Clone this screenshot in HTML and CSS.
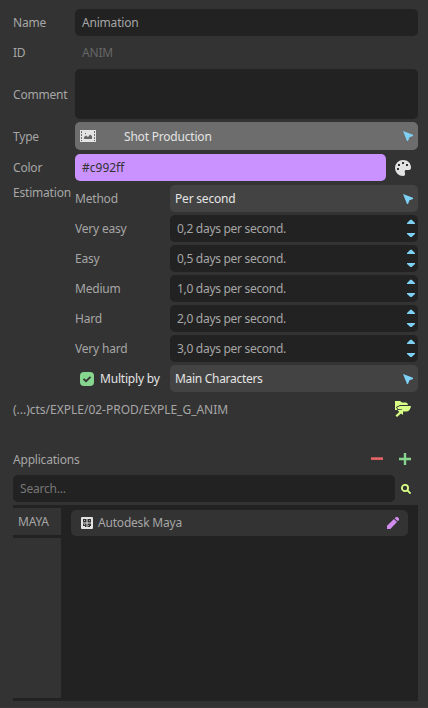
FILE: index.html
```html
<!DOCTYPE html>
<html lang="en">
<head>
<meta charset="utf-8">
<title>Step</title>
<link rel="stylesheet" href="styles.css">
</head>
<body>
<svg width="0" height="0" class="defs">
  <symbol id="arrow" viewBox="0 0 10 10"><path d="M0 0 10 3.800V5L6.500 6.200 5 10H4Z"/></symbol>
  <symbol id="spin" viewBox="0 0 8 18"><path d="M0 5V4L3.300 .7H4.700L8 4V5ZM0 14H8V15L4.700 18H3.300L0 15Z"/></symbol>
</svg>
<main class="panel">
  <div class="row"><label>Name</label><div class="field">Animation</div></div>
  <div class="row id"><label>ID</label><div class="plain">ANIM</div></div>
  <div class="row comment"><label class="low">Comment</label><div class="field area"></div></div>
  <div class="row type"><label class="low">Type</label>
    <div class="combo light">
      <svg class="film" viewBox="0 0 16 12"><path fill="#e3e3e3" fill-rule="evenodd" d="M0 0H16V12H0ZM1 1V3H2V1ZM1 4V6H2V4ZM1 7V9H2V7ZM1 10V11H2V10ZM14 1V3H15V1ZM14 4V6H15V4ZM14 7V9H15V7ZM14 10V11H15V10Z"/><path fill="#666" d="M4 9V7L6 5.500 8 7 10 4.500 12 6V9ZM5 3H6V4H5Z"/></svg>
      <span class="low">Shot Production</span><svg class="arrow"><use href="#arrow"/></svg></div>
  </div>
  <div class="row color"><label>Color</label><div class="swatch">#c992ff</div>
    <svg class="palette" viewBox="0 0 16 16"><path fill="#e3e3e3" d="M8 0C13 0 16 3.500 16 7.500 16 9.500 15 10 13 10H11C9.500 10 9.500 11.500 10 13 10.500 15 9.500 16 8 16A8 8 0 0 1 8 0Z"/><path fill="#333" d="M7 2H9V4H7ZM3 4H5V6H3ZM11 4H13V6H11ZM2 8H4V10H2Z"/></svg>
  </div>
  <section class="row estimation"><label>Estimation</label>
    <div class="grid">
      <span>Method</span><div class="combo"><span>Per second</span><svg class="arrow"><use href="#arrow"/></svg></div>
      <span>Very easy</span><div class="field num"><span>0,2 days per second.</span><svg class="spin"><use href="#spin"/></svg></div>
      <span>Easy</span><div class="field num"><span>0,5 days per second.</span><svg class="spin"><use href="#spin"/></svg></div>
      <span>Medium</span><div class="field num"><span>1,0 days per second.</span><svg class="spin"><use href="#spin"/></svg></div>
      <span>Hard</span><div class="field num"><span>2,0 days per second.</span><svg class="spin"><use href="#spin"/></svg></div>
      <span>Very hard</span><div class="field num"><span>3,0 days per second.</span><svg class="spin"><use href="#spin"/></svg></div>
      <div class="check"><svg viewBox="0 0 14 14"><rect width="14" height="14" rx="4" fill="#87d68f"/><path d="M3.500 6.800 6 9.200 10.500 4.800" fill="none" stroke="#333" stroke-width="1.800"/></svg><span>Multiply by</span></div>
      <div class="combo"><span class="main">Main Characters</span><svg class="arrow"><use href="#arrow"/></svg></div>
    </div>
  </section>
  <div class="path"><span class="low">(...)cts/EXPLE/02-PROD/EXPLE_G_ANIM</span>
    <svg class="folder" viewBox="0 0 16 16"><path fill="#d9ff87" d="M0 0H5L7 1.500H11Q13 2 13 4H5L1 6 2.500 9H0ZM5 5H16Q15 10 12 10.500H8L7 8.500 3 8 2 6.500ZM2.500 9H8V14L6 12.500 2 16 .5 14.500 4.200 11Z"/></svg>
  </div>
  <div class="apps"><span class="low">Applications</span>
    <svg class="minus" viewBox="0 0 12 12"><path d="M0 5.600H12" stroke="#e96667" stroke-width="2.600"/></svg>
    <svg class="plus" viewBox="0 0 12 12"><path d="M6 0V12M0 6H12" stroke="#87d68f" stroke-width="2.400"/></svg>
  </div>
  <div class="searchrow"><div class="field search">Search...</div>
    <svg class="find" viewBox="0 0 10 10"><circle cx="4" cy="4" r="3.100"/><path d="M6.200 6.200 9.600 9.600"/></svg></div>
  <div class="list">
    <div class="side"><div class="tab">MAYA</div><div class="blank"></div></div>
    <div class="items"><div class="item">
      <svg class="app" viewBox="0 0 12 12"><rect width="12" height="12" rx="1" fill="#e3e3e3"/><path fill="#333" d="M2 2H5.500V5.500H2ZM6.500 2H10V5.500H6.500ZM2 6.500H5.500V10H4V9H2ZM6.500 6.500H10V9H9V10H6.500Z"/><path fill="#aaa" d="M3 3H4V4H3ZM8 3H9V4H8ZM3 7H4V8H3ZM7 8H8V9H7Z"/></svg>
      <span>Autodesk Maya</span>
      <svg class="pencil" viewBox="0 0 12 12"><path fill="#d18cf0" d="M0 12V8.700L7 2 10 5 3.300 12ZM7.700 1.300 9 0H10.500L12 1.500V3L10.700 4.300Z"/></svg>
    </div></div>
  </div>
</main>
</body>
</html>
```
FILE: styles.css
```css
* { box-sizing: border-box; }
body { margin: 0; background: #333; color: #a6a6a6; font: 12px/16px "Noto Sans", "Open Sans", sans-serif; letter-spacing: -.2px; white-space: nowrap; }
svg { display: block; flex: none; }
.defs { position: absolute; }
.panel { height: 708px; padding: 9px 10px 0 13px; border-bottom: 1px solid #3b3739; }
.row { display: grid; grid-template-columns: 62px 1fr; align-items: center; height: 27px; }
.low { padding-top: 2px; }
.field { height: 27px; border-radius: 5px; background: #222; padding: 6px 7px 4px; }
.id { margin-top: 3px; }
.plain { padding-left: 7px; color: #666; }
.comment { height: 50px; margin-top: 3px; }
.area { height: 50px; }
.type { height: 28px; margin-top: 3px; }
.combo { display: flex; align-items: center; height: 27px; border-radius: 5px; background: #434343; padding: 0 5px; color: #e3e3e3; }
.light { height: 28px; background: #6d6d6d; }
.film { width: 16px; height: 12px; margin-right: 28px; }
.arrow { width: 10px; height: 10px; margin-left: auto; fill: #7ed0f5; }
.color { margin-top: 4px; grid-template-columns: 62px 311px 1fr; }
.swatch { height: 27px; border-radius: 5px; background: #c992ff; color: #333; padding: 6px 7px 4px; letter-spacing: 0; }
.palette { width: 16px; height: 16px; margin-left: 9px; }
.estimation { height: 207px; margin-top: 4px; align-items: start; }
.grid { display: grid; grid-template-columns: 95px 1fr; grid-auto-rows: 27px; row-gap: 3px; align-items: center; }
.num { display: flex; justify-content: space-between; padding-right: 3px; letter-spacing: -.3px; }
.spin { width: 8px; height: 18px; margin-top: -2px; fill: #7ed0f5; }
.check { display: flex; align-items: center; gap: 6px; padding-left: 5px; color: #e3e3e3; }
.check svg { width: 14px; height: 14px; }
.main { letter-spacing: -.3px; }
.path { display: flex; align-items: center; justify-content: space-between; height: 34px; padding-right: 7px; letter-spacing: -.01px; }
.folder { width: 16px; height: 16px; }
.apps { display: flex; align-items: center; height: 26px; margin-top: 20px; padding-right: 7px; }
.minus { width: 12px; height: 12px; margin-left: auto; margin-right: 16px; }
.plus { width: 12px; height: 12px; }
.searchrow { display: grid; grid-template-columns: 382px 10px; column-gap: 6px; align-items: center; margin-top: 3px; }
.search { color: #777; }
.find { width: 10px; height: 10px; fill: none; stroke: #d9ff87; stroke-width: 1.8; }
.list { display: grid; grid-template-columns: 48px 1fr; height: 196px; margin-top: 3px; padding: 3px 0; background: #222; }
.side { display: grid; grid-template-rows: 27px 1fr; row-gap: 3px; }
.tab { background: #333; padding: 6px 5px 4px; }
.blank { background: #333; }
.items { padding: 2px 10px 0; }
.item { display: flex; align-items: center; height: 26px; border-radius: 5px; background: #333; padding: 0 9px 0 10px; }
.app { width: 12px; height: 12px; margin-right: 5px; }
.pencil { width: 12px; height: 12px; margin-left: auto; }
```
